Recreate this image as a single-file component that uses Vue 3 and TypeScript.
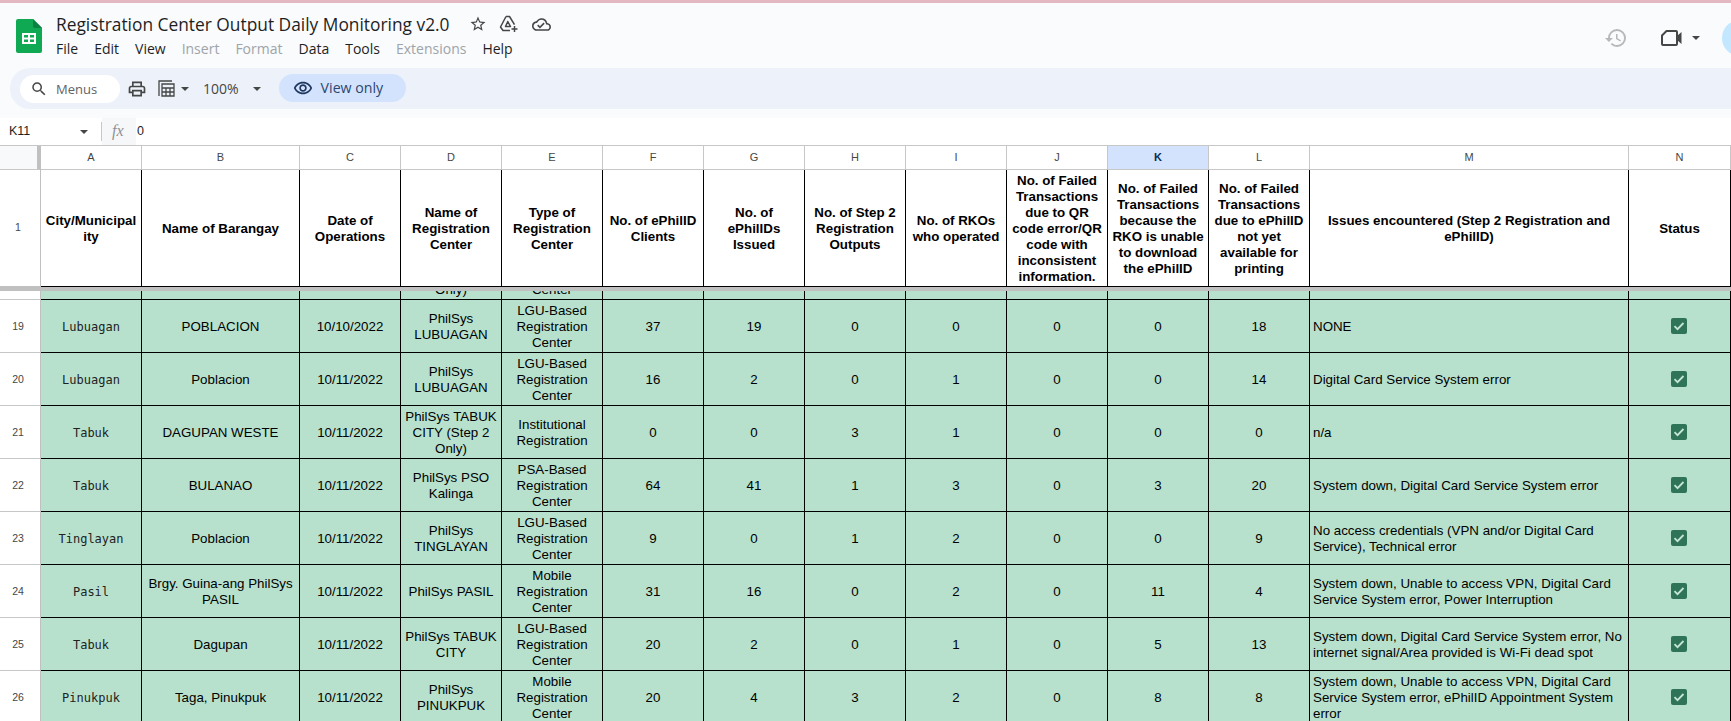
<script setup lang="ts">
interface Row {
  num: string
  city: string
  barangay: string
  date: string
  center: string
  type: string
  counts: string[]
  issues: string
}

const LGU = 'LGU-Based Registration Center'
const MOBILE = 'Mobile Registration Center'

const columns: string[] = ['A', 'B', 'C', 'D', 'E', 'F', 'G', 'H', 'I', 'J', 'K', 'L', 'M', 'N']
const menus: { label: string; off?: boolean }[] = [
  { label: 'File' },
  { label: 'Edit' },
  { label: 'View' },
  { label: 'Insert', off: true },
  { label: 'Format', off: true },
  { label: 'Data' },
  { label: 'Tools' },
  { label: 'Extensions', off: true },
  { label: 'Help' }
]
const heads: string[] = [
  'City/Municipality',
  'Name of Barangay',
  'Date of Operations',
  'Name of Registration Center',
  'Type of Registration Center',
  'No. of ePhilID Clients',
  'No. of ePhilIDs Issued',
  'No. of Step 2 Registration Outputs',
  'No. of RKOs who operated',
  'No. of Failed Transactions due to QR code error/QR code with inconsistent information.',
  'No. of Failed Transactions because the RKO is unable to download the ePhilID',
  'No. of Failed Transactions due to ePhilID not yet available for printing',
  'Issues encountered (Step 2 Registration and ePhilID)',
  'Status'
]
const rows: Row[] = [
  { num: '19', city: 'Lubuagan', barangay: 'POBLACION', date: '10/10/2022', center: 'PhilSys LUBUAGAN', type: LGU, counts: ['37', '19', '0', '0', '0', '0', '18'], issues: 'NONE' },
  { num: '20', city: 'Lubuagan', barangay: 'Poblacion', date: '10/11/2022', center: 'PhilSys LUBUAGAN', type: LGU, counts: ['16', '2', '0', '1', '0', '0', '14'], issues: 'Digital Card Service System error' },
  { num: '21', city: 'Tabuk', barangay: 'DAGUPAN WESTE', date: '10/11/2022', center: 'PhilSys TABUK CITY (Step 2 Only)', type: 'Institutional Registration', counts: ['0', '0', '3', '1', '0', '0', '0'], issues: 'n/a' },
  { num: '22', city: 'Tabuk', barangay: 'BULANAO', date: '10/11/2022', center: 'PhilSys PSO Kalinga', type: 'PSA-Based Registration Center', counts: ['64', '41', '1', '3', '0', '3', '20'], issues: 'System down, Digital Card Service System error' },
  { num: '23', city: 'Tinglayan', barangay: 'Poblacion', date: '10/11/2022', center: 'PhilSys TINGLAYAN', type: LGU, counts: ['9', '0', '1', '2', '0', '0', '9'], issues: 'No access credentials (VPN and/or Digital Card Service), Technical error' },
  { num: '24', city: 'Pasil', barangay: 'Brgy. Guina-ang PhilSys PASIL', date: '10/11/2022', center: 'PhilSys PASIL', type: MOBILE, counts: ['31', '16', '0', '2', '0', '11', '4'], issues: 'System down, Unable to access VPN, Digital Card Service System error, Power Interruption' },
  { num: '25', city: 'Tabuk', barangay: 'Dagupan', date: '10/11/2022', center: 'PhilSys TABUK CITY', type: LGU, counts: ['20', '2', '0', '1', '0', '5', '13'], issues: 'System down, Digital Card Service System error, No internet signal/Area provided is Wi-Fi dead spot' },
  { num: '26', city: 'Pinukpuk', barangay: 'Taga, Pinukpuk', date: '10/11/2022', center: 'PhilSys PINUKPUK', type: MOBILE, counts: ['20', '4', '3', '2', '0', '8', '8'], issues: 'System down, Unable to access VPN, Digital Card Service System error, ePhilID Appointment System error' }
]
</script>

<template>
  <div class="page">
    <header class="chrome">
      <div class="topbar">
        <svg class="logo" width="26" height="34" viewBox="0 0 26 34">
          <path d="M2 0h15l9 9v23a2 2 0 0 1-2 2H2a2 2 0 0 1-2-2V2a2 2 0 0 1 2-2z" fill="#0fa954" />
          <path d="M17 0l9 9h-7a2 2 0 0 1-2-2z" fill="#0b8043" />
          <path d="M6 14h14v11H6z M8 16v2.5h4V16z M14 16v2.5h4V16z M8 20.500v2.500h4v-2.500z M14 20.500v2.500h4v-2.500z" fill="#fff" fill-rule="evenodd" />
        </svg>
        <div class="titles">
          <div class="title-line">
            <span class="title">Registration Center Output Daily Monitoring v2.0</span>
            <svg class="star" width="18" height="18" viewBox="0 0 24 24"><path fill="#444746" d="M22 9.240l-7.190-.620L12 2 9.190 8.630 2 9.240l5.460 4.730L5.820 21 12 17.270 18.180 21l-1.630-7.030L22 9.240zM12 15.400l-3.760 2.270 1-4.280-3.320-2.880 4.380-.380L12 6.100l1.710 4.040 4.380.380-3.320 2.880 1 4.280L12 15.400z" /></svg>
            <svg class="drive" width="20" height="18" viewBox="0 0 20 18"><path fill="none" stroke="#444746" stroke-width="1.500" stroke-linejoin="round" d="M7 1.500h3.500l5 8.200M11 15.500H4L1.500 12 7 1.500M6.500 11.500h5L8.800 6.500z" /><path stroke="#444746" stroke-width="1.500" d="M15.500 11v6M12.500 14h6" /></svg>
            <svg class="cloud" width="19" height="19" viewBox="0 0 24 24"><path fill="#444746" d="M19.350 10.040A7.490 7.490 0 0 0 12 4C9.110 4 6.600 5.640 5.350 8.040A5.994 5.994 0 0 0 0 14c0 3.310 2.690 6 6 6h13c2.760 0 5-2.240 5-5 0-2.640-2.050-4.780-4.650-4.960zM19 18H6c-2.210 0-4-1.790-4-4 0-2.050 1.530-3.760 3.560-3.970l1.070-.110.500-.950A5.469 5.469 0 0 1 12 6c2.620 0 4.880 1.860 5.390 4.430l.300 1.500 1.530.110A2.980 2.980 0 0 1 22 15c0 1.650-1.350 3-3 3zm-9-3.820l-2.090-2.090L6.500 13.500 10 17l6.010-6.010-1.410-1.410z" /></svg>
          </div>
          <nav class="menus">
            <span v-for="m in menus" :key="m.label" class="menu" :class="{ off: m.off }">{{ m.label }}</span>
          </nav>
        </div>
        <div class="top-right">
          <svg class="history" width="24" height="24" viewBox="0 0 24 24"><path fill="#b8b8b8" d="M13 3a9 9 0 0 0-9 9H1l3.890 3.890.070.140L9 12H6c0-3.870 3.130-7 7-7s7 3.130 7 7-3.130 7-7 7c-1.930 0-3.680-.790-4.940-2.060l-1.420 1.420A8.954 8.954 0 0 0 13 21a9 9 0 0 0 0-18zm-1 5v5l4.280 2.540.720-1.210-3.500-2.080V8H12z" /></svg>
          <svg class="video" width="22" height="18" viewBox="0 0 22 18"><path fill="none" stroke="#444746" stroke-width="2" stroke-linejoin="round" d="M5.500 2H15a1 1 0 0 1 1 1v12a1 1 0 0 1-1 1H2a1 1 0 0 1-1-1V6.500z" /><path fill="#444746" d="M16 7l4.500-4v12L16 11z" /></svg>
          <span class="caret"></span>
          <span class="avatar"></span>
        </div>
      </div>
      <div class="toolbar">
        <div class="search">
          <svg width="18" height="18" viewBox="0 0 24 24"><path fill="#444746" d="M15.500 14h-.790l-.280-.270A6.471 6.471 0 0 0 16 9.500 6.500 6.500 0 1 0 9.500 16c1.610 0 3.090-.590 4.230-1.570l.270.280v.790l5 4.990L20.490 19l-4.990-5zm-6 0C7.010 14 5 11.990 5 9.500S7.010 5 9.500 5 14 7.010 14 9.500 11.990 14 9.500 14z" /></svg>
          <span class="search-text">Menus</span>
        </div>
        <svg class="print" width="20" height="20" viewBox="0 0 24 24"><path fill="#444746" d="M19 8h-1V3H6v5H5c-1.660 0-3 1.340-3 3v6h4v4h12v-4h4v-6c0-1.660-1.340-3-3-3zM8 5h8v3H8V5zm8 12v2H8v-4h8v2zm2-2v-2H6v2H4v-4c0-.550.450-1 1-1h14c.550 0 1 .450 1 1v4h-2z" /></svg>
        <svg class="calc" width="17" height="17" viewBox="0 0 17 17"><path fill="none" stroke="#444746" stroke-width="1.300" d="M1 16V1h13" /><path fill="none" stroke="#444746" stroke-width="1.300" d="M4 4h12v12H4zM4 8h12M4 12h12M8 8v8M12 8v8" /></svg>
        <span class="caret small-gap"></span>
        <span class="zoom-value">100%</span>
        <span class="caret zoom-caret"></span>
        <div class="view-only">
          <svg width="20" height="20" viewBox="0 0 24 24"><path fill="#1f3760" d="M12 6.500c3.790 0 7.170 2.130 8.820 5.500-1.650 3.370-5.020 5.500-8.820 5.500S4.830 15.370 3.180 12C4.830 8.630 8.210 6.500 12 6.500m0-2C7 4.500 2.730 7.610 1 12c1.730 4.390 6 7.500 11 7.500s9.270-3.110 11-7.500c-1.730-4.390-6-7.500-11-7.500zm0 5c1.380 0 2.500 1.120 2.500 2.500s-1.120 2.500-2.500 2.500-2.500-1.120-2.500-2.500 1.120-2.500 2.500-2.500m0-2c-2.480 0-4.500 2.020-4.500 4.500s2.020 4.500 4.500 4.500 4.500-2.020 4.500-4.500-2.020-4.500-4.500-4.500z" /></svg>
          <span>View only</span>
        </div>
      </div>
    </header>

    <div class="formula">
      <span class="cell-ref">K11</span>
      <span class="caret ref-caret"></span>
      <span class="divider"></span>
      <span class="fx">fx</span>
      <span class="formula-value">0</span>
    </div>

    <section class="sheet">
      <div class="grid-row col-heads">
        <div class="corner"></div>
        <div v-for="c in columns" :key="c" class="col-head" :class="{ picked: c === 'K' }">{{ c }}</div>
      </div>

      <div class="grid-row head-row">
        <div class="row-num">1</div>
        <div v-for="h in heads" :key="h" class="cell head-cell" :class="{ 'wide-head': h.startsWith('Issues') }">{{ h }}</div>
      </div>

      <div class="freeze"></div>

      <div class="clip">
        <div class="grid-row data-row">
          <div class="row-num"></div>
          <div class="cell"></div>
          <div class="cell"></div>
          <div class="cell"></div>
          <div class="cell">PhilSys TABUK CITY (Step 2 Only)</div>
          <div class="cell">LGU-Based Registration Center</div>
          <div v-for="n in 9" :key="n" class="cell"></div>
        </div>
      </div>

      <div v-for="r in rows" :key="r.num" class="grid-row data-row">
        <div class="row-num">{{ r.num }}</div>
        <div class="cell mono">{{ r.city }}</div>
        <div class="cell">{{ r.barangay }}</div>
        <div class="cell">{{ r.date }}</div>
        <div class="cell">{{ r.center }}</div>
        <div class="cell">{{ r.type }}</div>
        <div v-for="(n, i) in r.counts" :key="i" class="cell">{{ n }}</div>
        <div class="cell left">{{ r.issues }}</div>
        <div class="cell">
          <svg class="check" width="16" height="16" viewBox="0 0 16 16"><rect width="16" height="16" rx="2" fill="#2f7358" /><path d="M3.500 8.200l3 3 6-6.200" fill="none" stroke="#c4e6d6" stroke-width="1.800" /></svg>
        </div>
      </div>
    </section>
  </div>
</template>

<style>
html, body { margin: 0; overflow: hidden; background: #fff; }
</style>

<style scoped>
.page {
  width: 1731px;
  height: 721px;
  overflow: hidden;
  font-family: "Liberation Sans", Arial, sans-serif;
  color: #000;
}
.chrome {
  height: 118px;
  box-sizing: border-box;
  background: #f9fbfd;
  border-top: 3px solid #e4b8c0;
}
.topbar {
  height: 65px;
  display: flex;
  align-items: flex-start;
  overflow: hidden;
}
.logo { margin: 16px 0 0 16px; flex: none; }
.titles { margin-left: 14px; padding-top: 9px; }
.title-line { display: flex; align-items: center; height: 24px; }
.title {
  font-family: "Open Sans", sans-serif;
  font-size: 17.350px;
  color: #1f1f1f;
  white-space: nowrap;
}
.star { margin-left: 19px; }
.drive { margin-left: 12px; }
.cloud { margin-left: 13px; }
.menus { display: flex; gap: 16px; margin-top: 1px; }
.menu {
  font-family: "Open Sans", sans-serif;
  font-size: 14px;
  line-height: 24px;
  color: #1f1f1f;
}
.menu.off { color: #a0a4a8; }
.top-right {
  margin-left: auto;
  display: flex;
  align-items: center;
  padding-top: 18px;
  height: 34px;
  margin-right: -27px;
}
.history { margin-right: 33px; }
.caret {
  display: inline-block;
  width: 0;
  height: 0;
  border-left: 4px solid transparent;
  border-right: 4px solid transparent;
  border-top: 4px solid #444746;
  flex: none;
}
.top-right .caret { margin: 0 22px 0 9px; }
.avatar {
  width: 36px;
  height: 36px;
  border-radius: 50%;
  background: #c2e7ff;
}
.toolbar {
  height: 41px;
  margin-left: 10px;
  background: #edf2fa;
  border-radius: 20px 0 0 20px;
  display: flex;
  align-items: center;
}
.search {
  width: 100px;
  height: 28px;
  box-sizing: border-box;
  margin-left: 10px;
  padding-left: 10px;
  border-radius: 14px;
  background: #fff;
  display: flex;
  align-items: center;
}
.search-text {
  margin-left: 8px;
  font-family: "Open Sans", sans-serif;
  font-size: 13px;
  color: #5f6368;
}
.print { margin-left: 7px; }
.calc { margin-left: 11px; }
.small-gap { margin-left: 6px; }
.zoom-value {
  margin-left: 14px;
  font-family: "Open Sans", sans-serif;
  font-size: 14px;
  color: #444746;
}
.zoom-caret { margin-left: 14px; }
.view-only {
  margin-left: 18px;
  width: 127px;
  height: 28px;
  box-sizing: border-box;
  padding-left: 14px;
  border-radius: 14px;
  background: #d3e3fd;
  display: flex;
  align-items: center;
  gap: 8px;
  font-family: "Open Sans", sans-serif;
  font-size: 14.200px;
  font-weight: 500;
  color: #2b4670;
  margin-top: -2px;
}
.formula {
  height: 28px;
  box-sizing: border-box;
  border-bottom: 1px solid #c7c7c7;
  display: flex;
  align-items: center;
  background: #fff;
}
.cell-ref {
  margin-left: 9px;
  width: 71px;
  font-size: 12.500px;
  color: #1f1f1f;
  margin-top: -2px;
}
.ref-caret { margin-right: 13px; }
.divider { width: 1px; height: 19px; background: #c7c7c7; }
.fx {
  width: 34px;
  height: 100%;
  box-sizing: border-box;
  padding-left: 10px;
  background: #f6f7f8;
  font-family: "Liberation Serif", serif;
  font-style: italic;
  font-size: 16px;
  line-height: 26px;
  color: #8e9196;
}
.formula-value { margin-left: 1px; font-size: 12.500px; color: #1f1f1f; margin-top: -2px; }
.grid-row {
  display: grid;
  grid-template-columns: 41px 101px 158px repeat(10, 101px) 319px 102px;
}
.col-heads { height: 24px; }
.corner {
  box-sizing: border-box;
  background: #f8f9fa;
  border-right: 4px solid #c0c0c0;
  border-bottom: 1px solid #c7c7c7;
}
.col-head {
  box-sizing: border-box;
  border-right: 1px solid #c7c7c7;
  border-bottom: 1px solid #c7c7c7;
  display: flex;
  align-items: center;
  justify-content: center;
  font-size: 11px;
  color: #444746;
  padding-bottom: 1px;
}
.col-head.picked { background: #d3e3fd; font-weight: 700; color: #0b2b55; }
.head-row { height: 117px; }
.row-num {
  box-sizing: border-box;
  background: #fff;
  border-right: 1px solid #c0c0c0;
  border-bottom: 1px solid #c7c7c7;
  display: flex;
  align-items: center;
  justify-content: center;
  font-size: 10.500px;
  color: #444746;
  padding: 0 4px 0 0;
}
.head-row .row-num { border-bottom-color: #c0c0c0; padding-bottom: 2px; }
.cell {
  box-sizing: border-box;
  border-right: 1px solid #000;
  border-bottom: 1px solid #000;
  background: #b7e1cd;
  padding: 2px 3px 0;
  display: flex;
  align-items: center;
  justify-content: center;
  text-align: center;
  font-size: 13.330px;
  line-height: 16px;
  overflow: hidden;
  overflow-wrap: anywhere;
}
.head-cell {
  background: #fff;
  font-weight: 700;
}
.wide-head { padding: 2px 12px 0; }
.left { justify-content: flex-start; text-align: left; }
.mono { font-family: "DejaVu Sans Mono", monospace; font-size: 12px; color: #222; }
.check { margin: -2px 1px 0 0; }
.freeze { height: 4px; background: #c0c0c0; }
.clip {
  height: 9px;
  overflow: hidden;
  display: flex;
  flex-direction: column;
  justify-content: flex-end;
}
.data-row { height: 53px; flex: none; }
</style>
